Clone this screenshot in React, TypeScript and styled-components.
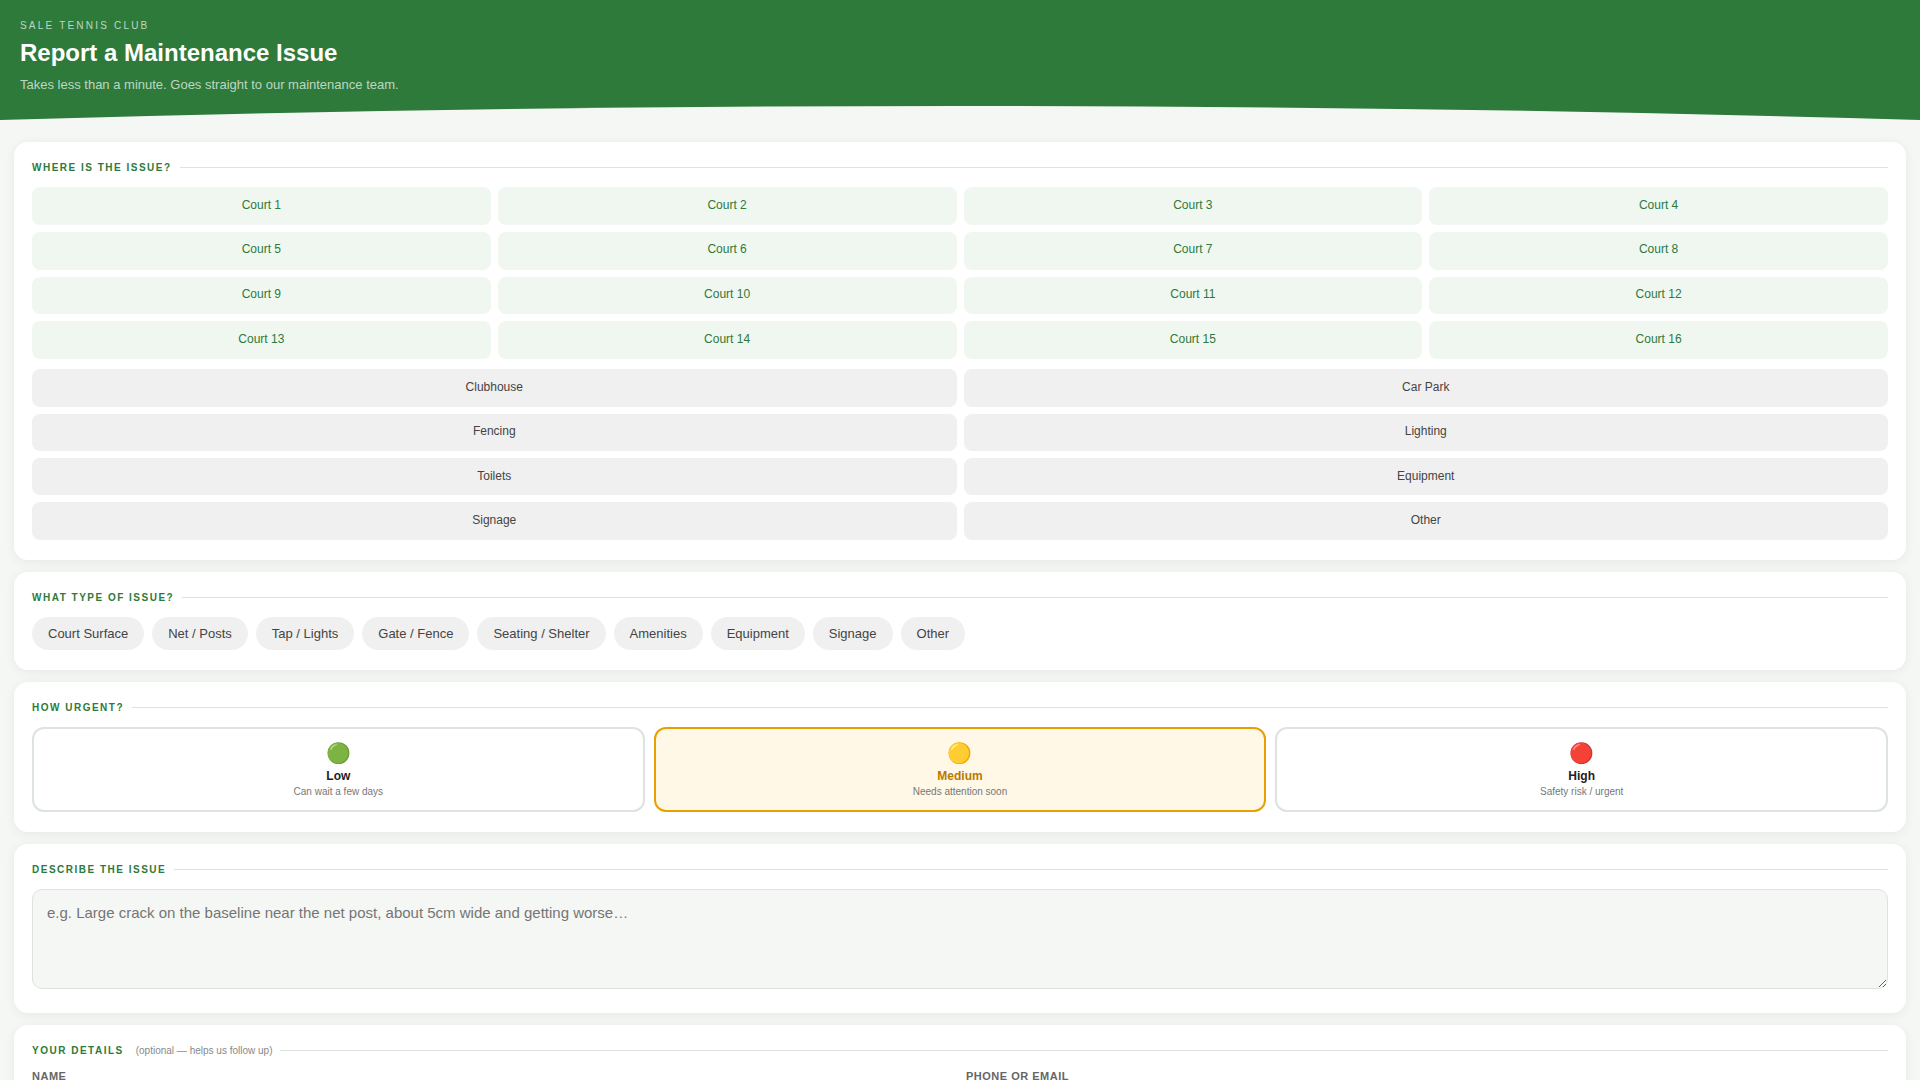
import React from "react";
import styled, { createGlobalStyle } from "styled-components";

const Global = createGlobalStyle`
  * { box-sizing: border-box; }
  html, body { margin: 0; padding: 0; }
  body { background: #f5f7f4; font-family: "Liberation Sans", Arial, sans-serif; color: #222; }
`;

const Header = styled.header`
  position: relative;
  background: #2d7a3a;
  color: #fff;
  height: 120px;
  padding: 20px 20px 0;
`;
const Eyebrow = styled.div`
  font-size: 10px;
  line-height: 11px;
  letter-spacing: 2.2px;
  font-weight: 400;
  color: rgba(255, 255, 255, 0.7);
  text-transform: uppercase;
  margin-bottom: 7px;
`;
const Title = styled.h1`
  margin: 0 0 9px;
  font-size: 24px;
  line-height: 30px;
  font-weight: 700;
`;
const Sub = styled.p`
  margin: 0;
  font-size: 13px;
  line-height: 15px;
  color: rgba(255, 255, 255, 0.7);
`;
const Wave = styled.svg`
  position: absolute;
  left: 0;
  bottom: 0;
  width: 100%;
  height: 16px;
  display: block;
`;
const Main = styled.main`
  padding: 22px 14px 14px;
  display: flex;
  flex-direction: column;
  gap: 12px;
`;
const Card = styled.section`
  background: #fff;
  border-radius: 14px;
  padding: 20px 18px;
  box-shadow: 0 2px 12px rgba(0, 0, 0, 0.06);
`;
const SectionTitle = styled.div`
  display: flex;
  align-items: center;
  gap: 8px;
  margin-bottom: 14px;
  font-size: 10px;
  line-height: 11px;
  font-weight: 700;
  letter-spacing: 1.5px;
  color: #2d7a3a;
  text-transform: uppercase;
  white-space: nowrap;
  &::after {
    content: "";
    flex: 1;
    height: 1px;
    background: #dde3dd;
  }
`;
const Optional = styled.span`
  font-size: 10px;
  font-weight: 400;
  letter-spacing: 0;
  text-transform: none;
  color: #888;
  margin-left: 4px;
`;
const Grid = styled.div<{ $cols: number; $mb?: number }>`
  display: grid;
  grid-template-columns: repeat(${(p) => p.$cols}, 1fr);
  gap: 7px;
  margin-bottom: ${(p) => p.$mb ?? 0}px;
`;
const PlaceBtn = styled.button<{ $court?: boolean }>`
  border: 0;
  border-radius: 8px;
  padding: 11.5px 8px 12.5px;
  line-height: ${(p) => (p.$court ? "13.8px" : "13.4px")};
  font-family: inherit;
  font-size: 12px;
  text-align: center;
  background: ${(p) => (p.$court ? "#f0f7f1" : "#f0f0f0")};
  color: ${(p) => (p.$court ? "#2d7a3a" : "#444")};
`;
const Pills = styled.div`
  display: flex;
  flex-wrap: wrap;
  gap: 8px;
`;
const Pill = styled.button`
  border: 0;
  border-radius: 20px;
  padding: 9px 16px;
  background: #f0f0f0;
  color: #444;
  font-family: inherit;
  font-size: 13px;
`;
const UrgencyRow = styled.div`
  display: grid;
  grid-template-columns: repeat(3, 1fr);
  gap: 9px;
`;
const Urgency = styled.button<{ $active?: boolean }>`
  display: flex;
  flex-direction: column;
  align-items: center;
  height: 85px;
  padding: 13px 8px 11px;
  border-radius: 12px;
  font-family: inherit;
  border: 2px solid ${(p) => (p.$active ? "#e8a000" : "#dde3dd")};
  background: ${(p) => (p.$active ? "#fff8e6" : "#fff")};
`;
const Emoji = styled.span`
  font-size: 20px;
  line-height: 22px;
  margin-bottom: 5px;
`;
const UrgencyName = styled.span<{ $active?: boolean }>`
  font-size: 12px;
  line-height: 14px;
  font-weight: 700;
  color: ${(p) => (p.$active ? "#b87a00" : "#222")};
`;
const UrgencyHint = styled.span`
  font-size: 10px;
  line-height: 12px;
  margin-top: 3px;
  color: #777;
`;
const TextArea = styled.textarea`
  width: 100%;
  height: 100px;
  padding: 12px 14px;
  background: #f5f7f4;
  border: 1px solid #dde3dd;
  border-radius: 10px;
  font-family: inherit;
  font-size: 15px;
  line-height: 1.5;
  color: #222;
  resize: vertical;
  &::placeholder {
    color: #757575;
  }
`;
const Fields = styled.div`
  display: grid;
  grid-template-columns: repeat(2, 1fr);
  gap: 12px;
`;
const FieldLabel = styled.label`
  display: block;
  font-size: 11px;
  line-height: 13px;
  font-weight: 700;
  letter-spacing: 0.5px;
  color: #666;
  text-transform: uppercase;
`;

const courts = Array.from({ length: 16 }, (_, i) => `Court ${i + 1}`);
const places = ["Clubhouse", "Car Park", "Fencing", "Lighting", "Toilets", "Equipment", "Signage", "Other"];
const types = ["Court Surface", "Net / Posts", "Tap / Lights", "Gate / Fence", "Seating / Shelter", "Amenities", "Equipment", "Signage", "Other"];
const urgencies = [
  { icon: "🟢", name: "Low", hint: "Can wait a few days" },
  { icon: "🟡", name: "Medium", hint: "Needs attention soon", active: true },
  { icon: "🔴", name: "High", hint: "Safety risk / urgent" },
];

export default function App() {
  return (
    <>
      <Global />
      <Header>
        <Eyebrow>Sale Tennis Club</Eyebrow>
        <Title>Report a Maintenance Issue</Title>
        <Sub>Takes less than a minute. Goes straight to our maintenance team.</Sub>
        <Wave viewBox="0 0 1920 16" preserveAspectRatio="none" aria-hidden="true">
          <path d="M0 16 Q960 -12 1920 16 L1920 16 L0 16 Z" fill="#f5f7f4" />
        </Wave>
      </Header>
      <Main>
        <Card>
          <SectionTitle>Where is the issue?</SectionTitle>
          <Grid $cols={4} $mb={10}>
            {courts.map((c) => (
              <PlaceBtn key={c} $court>{c}</PlaceBtn>
            ))}
          </Grid>
          <Grid $cols={2}>
            {places.map((p) => (
              <PlaceBtn key={p}>{p}</PlaceBtn>
            ))}
          </Grid>
        </Card>
        <Card>
          <SectionTitle>What type of issue?</SectionTitle>
          <Pills>
            {types.map((t) => (
              <Pill key={t}>{t}</Pill>
            ))}
          </Pills>
        </Card>
        <Card>
          <SectionTitle>How urgent?</SectionTitle>
          <UrgencyRow>
            {urgencies.map((u) => (
              <Urgency key={u.name} $active={u.active}>
                <Emoji>{u.icon}</Emoji>
                <UrgencyName $active={u.active}>{u.name}</UrgencyName>
                <UrgencyHint>{u.hint}</UrgencyHint>
              </Urgency>
            ))}
          </UrgencyRow>
        </Card>
        <Card>
          <SectionTitle>Describe the issue</SectionTitle>
          <TextArea placeholder="e.g. Large crack on the baseline near the net post, about 5cm wide and getting worse…" />
        </Card>
        <Card>
          <SectionTitle>
            Your details <Optional>(optional — helps us follow up)</Optional>
          </SectionTitle>
          <Fields>
            <FieldLabel>Name</FieldLabel>
            <FieldLabel>Phone or email</FieldLabel>
          </Fields>
        </Card>
      </Main>
    </>
  );
}
